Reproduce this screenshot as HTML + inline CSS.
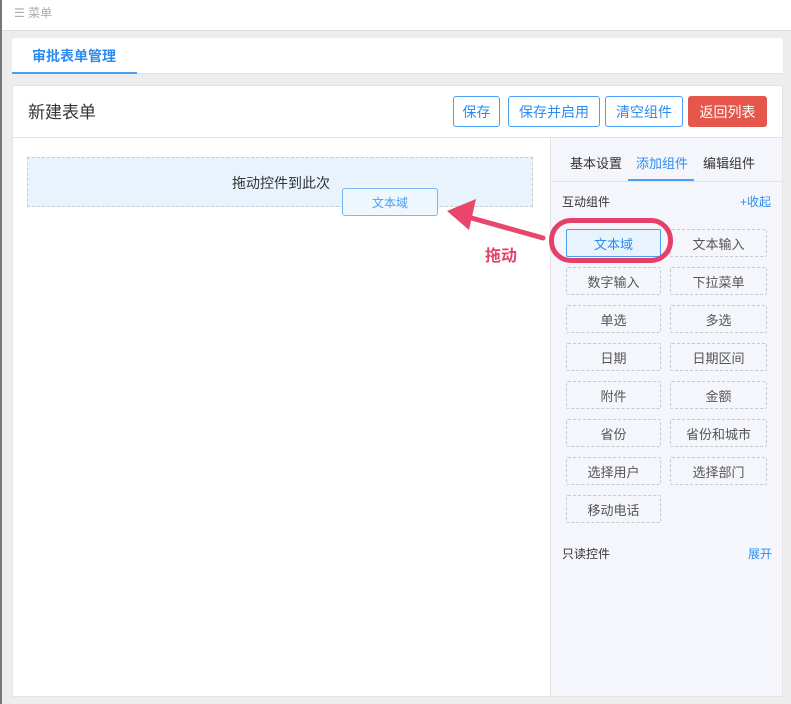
<!DOCTYPE html>
<html><head><meta charset="utf-8"><style>
*{box-sizing:border-box;margin:0;padding:0}
body{width:791px;height:704px;background:#ededed;font-family:"Liberation Sans","Noto Sans CJK SC",sans-serif;position:relative;overflow:hidden;font-size:13px;color:#333}
.a{position:absolute}
.btn{position:absolute;top:96px;height:31px;border:1px solid #4a9ff5;border-radius:3px;color:#2d8cf0;font-size:14px;display:flex;align-items:center;justify-content:center;background:#fff}
.g{position:absolute;width:95px;height:28px;border:1px dashed #c5c8ce;border-radius:2px;font-size:13px;color:#555;display:flex;align-items:center;justify-content:center}
</style></head><body>
<div class="a" style="left:0;top:0;width:791px;height:31px;background:#fff;border-bottom:1px solid #ddd"></div>
<div class="a" style="left:0;top:0;width:2px;height:704px;background:#777"></div>
<div class="a" style="left:14px;top:4px;color:#aaa;font-size:12px">☰ 菜单</div>
<div class="a" style="left:12px;top:38px;width:771px;height:36px;background:#fff;border-radius:3px 3px 0 0;border-bottom:1px solid #e2e2e2"></div>
<div class="a" style="left:12px;top:72px;width:125px;height:2px;background:#4a9ff5"></div>
<div class="a" style="left:32px;top:46px;color:#2d8cf0;font-size:14px;font-weight:bold">审批表单管理</div>
<div class="a" style="left:12px;top:85px;width:771px;height:612px;background:#fff;border:1px solid #e3e3e3"></div>
<div class="a" style="left:13px;top:137px;width:769px;height:1px;background:#e3e3e3"></div>
<div class="a" style="left:28px;top:98px;font-size:17px;color:#333">新建表单</div>
<div class="btn" style="left:453px;width:47px">保存</div>
<div class="btn" style="left:508px;width:92px">保存并启用</div>
<div class="btn" style="left:605px;width:78px">清空组件</div>
<div class="btn" style="left:688px;width:79px;background:#e5574b;border-color:#e5574b;color:#fff">返回列表</div>
<div class="a" style="left:27px;top:157px;width:506px;height:50px;background:#e8f3fd;border:1px dashed #ccc"></div>
<div class="a" style="left:232px;top:173px;font-size:14px;color:#333">拖动控件到此次</div>
<div class="a" style="left:342px;top:188px;width:96px;height:28px;background:#eef6fe;border:1px solid #7ab8f5;border-radius:3px;color:#4a9ff5;display:flex;align-items:center;justify-content:center;font-size:12px">文本域</div>
<div class="a" style="left:550px;top:138px;width:232px;height:558px;background:#f4f6fb;border-left:1px solid #e3e3e3"></div>
<div class="a" style="left:551px;top:181px;width:231px;height:1px;background:#e3e3e3"></div>
<div class="a" style="left:628px;top:179px;width:66px;height:2px;background:#4a9ff5"></div>
<div class="a" style="left:570px;top:153px">基本设置</div>
<div class="a" style="left:636px;top:153px;color:#2d8cf0">添加组件</div>
<div class="a" style="left:703px;top:153px">编辑组件</div>
<div class="a" style="left:562px;top:193px;font-size:12px">互动组件</div>
<div class="a" style="left:740px;top:193px;font-size:12px;color:#2d8cf0">+收起</div>
<div class="g" style="left:566px;top:229px;border:1px solid #4a9ff5;background:#e8f3fd;color:#2d8cf0">文本域</div>
<div class="g" style="left:670px;top:229px;width:97px">文本输入</div>
<div class="g" style="left:566px;top:267px">数字输入</div>
<div class="g" style="left:670px;top:267px;width:97px">下拉菜单</div>
<div class="g" style="left:566px;top:305px">单选</div>
<div class="g" style="left:670px;top:305px;width:97px">多选</div>
<div class="g" style="left:566px;top:343px">日期</div>
<div class="g" style="left:670px;top:343px;width:97px">日期区间</div>
<div class="g" style="left:566px;top:381px">附件</div>
<div class="g" style="left:670px;top:381px;width:97px">金额</div>
<div class="g" style="left:566px;top:419px">省份</div>
<div class="g" style="left:670px;top:419px;width:97px">省份和城市</div>
<div class="g" style="left:566px;top:457px">选择用户</div>
<div class="g" style="left:670px;top:457px;width:97px">选择部门</div>
<div class="g" style="left:566px;top:495px">移动电话</div>
<div class="a" style="left:562px;top:545px;font-size:12px">只读控件</div>
<div class="a" style="left:748px;top:545px;font-size:12px;color:#2d8cf0">展开</div>
<div class="a" style="left:549px;top:218px;width:124px;height:45px;border:5px solid #e4406a;border-radius:22px"></div>
<svg class="a" style="left:0;top:0" width="791" height="704">
<line x1="543" y1="238" x2="468" y2="217" stroke="#e8466a" stroke-width="5" stroke-linecap="round"/>
<polygon points="447,211 476,199 469,230" fill="#e8466a"/>
</svg>
<div class="a" style="left:485px;top:242px;color:#e4406a;font-size:16px;font-weight:bold;text-shadow:1px 1px 1px #fff">拖动</div>
</body></html>
